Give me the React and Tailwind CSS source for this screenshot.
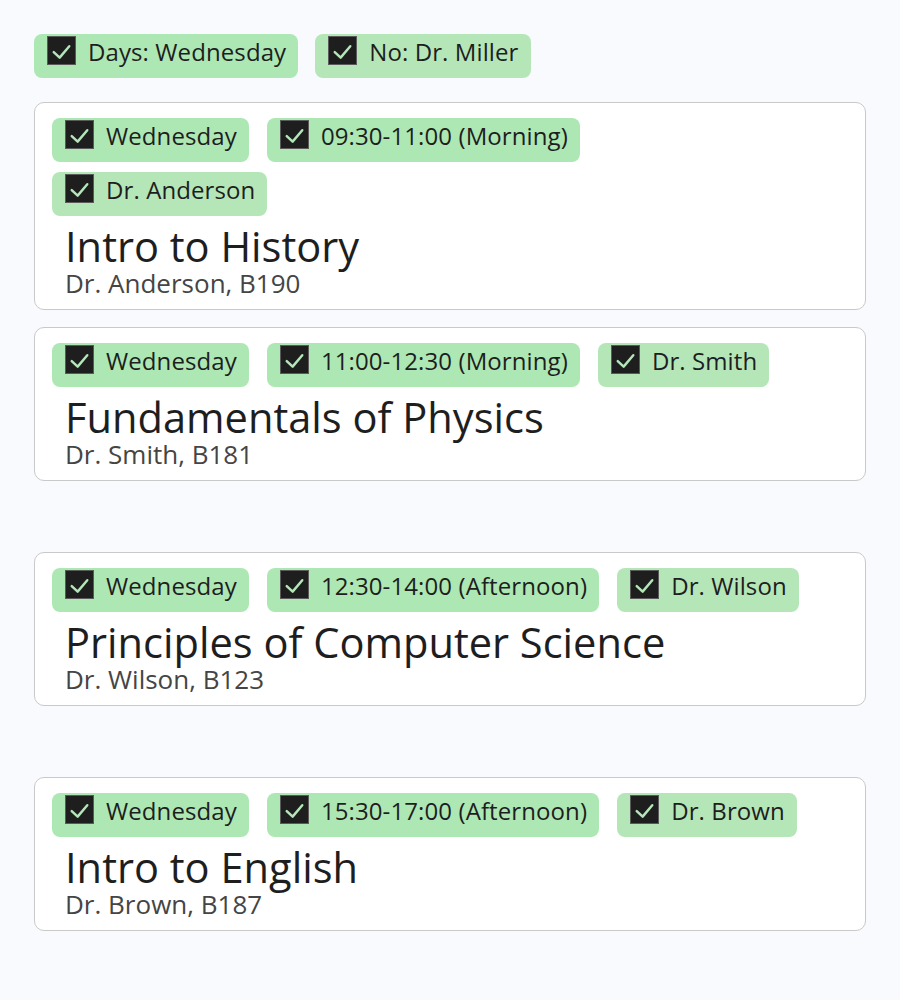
import React from "react";

const G1 = "bg-[#ade8b4]";
const G2 = "bg-[#b5e6b8]";

function Check() {
  return (
    <span className="mt-[2px] flex h-[29px] w-[29px] shrink-0 border border-[#5a5a5a] bg-[#1e1e1e]">
      <svg width="27" height="27" viewBox="0 0 16 16" fill="none">
        <path d="M3.4 8.9 L6.9 12.2 L12.6 5.5" stroke="#b4e6b9" strokeWidth="1.45" strokeLinecap="round" strokeLinejoin="round" />
      </svg>
    </span>
  );
}

function Chip({ label, alt }) {
  return (
    <div className={`flex h-[44px] items-start gap-[12px] rounded-[8px] pl-[13px] pr-[12px] ${alt ? G2 : G1}`}>
      <Check />
      <span className="text-[24px] leading-[35px] tracking-[0.1px] text-[#1e1e1e]">{label}</span>
    </div>
  );
}

const courses = [
  { time: "09:30-11:00 (Morning)", dr: "Dr. Anderson", title: "Intro to History", sub: "Dr. Anderson, B190" },
  { time: "11:00-12:30 (Morning)", dr: "Dr. Smith", title: "Fundamentals of Physics", sub: "Dr. Smith, B181" },
  { time: "12:30-14:00 (Afternoon)", dr: "Dr. Wilson", title: "Principles of Computer Science", sub: "Dr. Wilson, B123" },
  { time: "15:30-17:00 (Afternoon)", dr: "Dr. Brown", title: "Intro to English", sub: "Dr. Brown, B187" },
];

export default function App() {
  return (
    <div className="min-h-[1000px] w-[900px] bg-[#f9fafe] px-[34px] pt-[34px]" style={{ fontFamily: '"Open Sans", sans-serif' }}>
      <div className="flex gap-[17px]">
        <Chip label="Days: Wednesday" />
        <Chip label="No: Dr. Miller" alt />
      </div>
      <div className="mt-[24px] flex flex-col">
        {courses.map((c) => (
          <div key={c.title} className="h-[225px]">
            <div className="rounded-[10px] border border-[#c9c9c9] bg-white px-[17px] pt-[15px] pb-[13px]">
              <div className="flex max-w-[756px] flex-wrap gap-x-[18px] gap-y-[10px]">
                <Chip label="Wednesday" />
                <Chip label={c.time} />
                <Chip label={c.dr} alt />
              </div>
              <div className="pl-[13px] pt-[6px]">
                <div className="text-[41.6px] leading-[48px] text-[#1e1e1e]">{c.title}</div>
                <div className="text-[26px] leading-[26px] text-[#454545]">{c.sub}</div>
              </div>
            </div>
          </div>
        ))}
      </div>
    </div>
  );
}
